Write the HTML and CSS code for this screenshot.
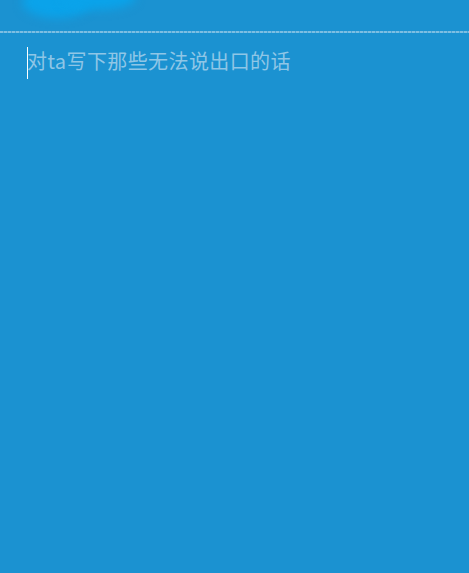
FILE: index.html
```html
<!DOCTYPE html>
<html lang="zh">
<head>
<meta charset="utf-8">
<link rel="stylesheet" href="styles.css">
</head>
<body>
<div class="page">
  <div class="top">
    <div class="blob"></div>
    <div class="blob blob2"></div>
  </div>
  <div class="divider"></div>
  <div class="editor">
    <span class="cursor"></span><span class="placeholder">对ta写下那些无法说出口的话</span>
  </div>
</div>
</body>
</html>
```
FILE: styles.css
```css
html, body {
  margin: 0;
  padding: 0;
  background: #1b92d1;
}
.page {
  width: 469px;
  height: 573px;
  background: #1b92d1;
  overflow: hidden;
  font-family: "Noto Sans CJK SC", "Roboto", sans-serif;
}
.top {
  position: relative;
  height: 31px;
}
.blob {
  position: absolute;
  left: 22px;
  top: -14px;
  width: 70px;
  height: 32px;
  border-radius: 50%;
  background: #0aa3ea;
  filter: blur(5px);
}
.blob2 {
  left: 60px;
  top: -16px;
  width: 76px;
  height: 26px;
}
.divider {
  height: 2px;
  background: repeating-linear-gradient(90deg, rgba(190, 220, 238, 0.75) 0 3px, rgba(160, 205, 232, 0.45) 3px 4px);
  opacity: 0.8;
}
.editor {
  display: flex;
  align-items: center;
  padding: 14px 0 0 27px;
  height: 32px;
}
.cursor {
  width: 1px;
  height: 32px;
  background: #ffffff;
  flex: none;
}
.placeholder {
  color: #8fc6e6;
  font-size: 20px;
  letter-spacing: 0.4px;
  line-height: 32px;
  margin-left: -1px;
  position: relative;
  top: -2px;
}
```
